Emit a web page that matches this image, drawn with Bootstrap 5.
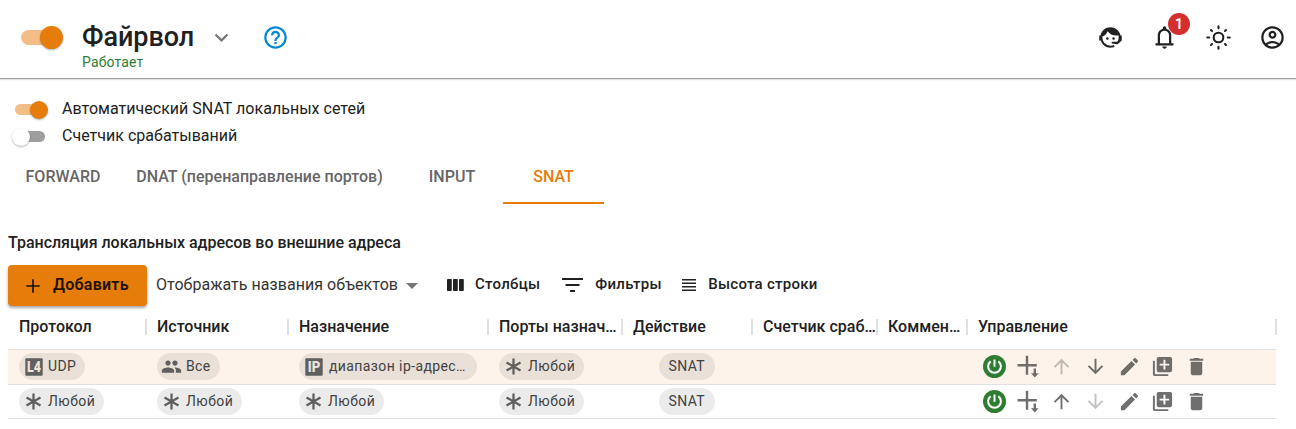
<!DOCTYPE html>
<html lang="ru">
<head>
<meta charset="utf-8">
<meta name="viewport" content="width=device-width, initial-scale=1">
<title>Файрвол</title>
<link href="https://cdn.jsdelivr.net/npm/bootstrap@5.3.0/dist/css/bootstrap.min.css" rel="stylesheet">
<style>
:root { --accent: #e67c0a; --ink: #212121; --mute: #666; --line: #e0e0e0; }
html, body { height: 100%; overflow: hidden; }
body { font-family: Roboto, "Noto Sans", sans-serif; color: var(--ink); font-size: 16px; line-height: 1.5; background: #fff; }
svg { display: block; flex: none; fill: currentColor; }
.topbar { height: 79px; border-bottom: 1px solid #a3a3a3; box-shadow: 0 1px 1px rgba(0,0,0,.12); padding: 0 10px 0 21px; }
.title-block { margin: 21px 0 0 23px; width: 112px; }
.top-icon { margin-top: 24px; }
.toggle { position: relative; display: block; width: 30px; height: 11px; border-radius: 6px; background: #9e9e9e; flex: none; }
.toggle::after { content: ""; position: absolute; left: -3px; top: -3px; width: 18px; height: 18px; border-radius: 50%; background: #fff; box-shadow: 0 1px 2px rgba(0,0,0,.3); }
.toggle.on { background: #f3be85; }
.toggle.on::after { left: 15px; background: var(--accent); }
.toggle.big { width: 38px; height: 15px; border-radius: 8px; margin-top: 30px; }
.toggle.big::after { left: 19px; top: -4px; width: 23px; height: 23px; }
.page-name { font-size: 27px; font-weight: 490; line-height: 32px; letter-spacing: -.05px; }
.state { font-size: 14px; line-height: 18px; color: #2e7d32; letter-spacing: .15px; }
.count { position: absolute; left: 17px; top: -11px; width: 22px; height: 22px; border-radius: 50%; background: #d32f2f; color: #fff; font-size: 14px; font-weight: 600; line-height: 22px; text-align: center; }
.opt { height: 27px; padding-left: 15px; letter-spacing: .02px; }
.opt .toggle { margin-top: 1px; }
.opt .cap { margin-left: 17px; }
.sections { height: 55px; color: var(--mute); font-weight: 490; letter-spacing: .02px; }
.sections a { color: inherit; text-decoration: none; line-height: 55px; height: 55px; text-align: center; white-space: nowrap; }
.sections a.current { color: var(--accent); border-bottom: 2px solid var(--accent); }
.subject { font-weight: 490; font-size: 16px; line-height: 24px; padding-left: 8px; margin-top: 27px; letter-spacing: -.02px; }
.tools { height: 41px; margin-top: 10px; padding-left: 8px; font-weight: 500; font-size: 15px; letter-spacing: .27px; }
.tools > span { position: relative; top: -1px; }
.add { width: 139px; height: 41px; border-radius: 4px; background: var(--accent); color: #1d1206; font-size: 16px; padding: 0 0 0 15px; letter-spacing: .25px; box-shadow: 0 2px 3px rgba(0,0,0,.35); }
.add span { margin: -2px 0 0 10px; font-weight: 600; }
.pick { font-weight: 400; font-size: 16px; letter-spacing: .04px; color: #333; margin-left: 9px; }
.rules { table-layout: fixed; width: 1268px; margin: 0 0 0 8px; border-collapse: separate; border-spacing: 0; }
.rules th { position: relative; height: 44px; padding: 0 0 2px 11px; font-weight: 480; font-size: 16px; border-bottom: 1px solid var(--line); letter-spacing: 0; }
.rules th > div, .chip span { overflow: hidden; white-space: nowrap; text-overflow: ellipsis; }
.rules th::after { content: ""; position: absolute; right: -1px; top: 13px; width: 2px; height: 16px; background: var(--line); }
.rules td { height: 35px; padding: 3px 0 0 11px; border-bottom: 1px solid var(--line); vertical-align: top; }
.rules tr.picked td { background: #fdf3ea; }
.rules tr:last-child td { height: 34px; }
.chip { height: 27px; width: max-content; border-radius: 14px; background: rgba(0,0,0,.08); padding: 0 9px 0 6px; font-size: 14px; font-weight: 370; letter-spacing: .4px; color: #424242; line-height: 27px; }
.chip svg { color: #5f5f5f; margin-right: 6px; }
.chip .people { margin: 0 4px 0 -2px; }
.chip .boxed { margin-right: 5px; }
.chip.plain { margin-left: 26px; padding-left: 9.5px; padding-right: 9.5px; }
.chip.wide { width: 178px; }
.glyph-box { font: 900 14.5px/17px Roboto, sans-serif; letter-spacing: 0; fill: #ebe3dc; }
.acts { color: #6f6c69; gap: 10.7px; padding: 2px 0 0 5px; }
tr:last-child .acts { color: #6f6f6f; }
.acts .off { opacity: .42; }
</style>
</head>
<body>
<svg width="0" height="0" class="position-absolute">
  <symbol id="star" viewBox="0 0 18 18"><path d="M9 .5v17M1.6 4.7l14.8 8.6M1.6 13.3l14.8-8.6" fill="none" stroke="currentColor" stroke-width="2.4"/></symbol>
  <symbol id="people" viewBox="0 0 24 24"><path d="M16 11c1.66 0 2.99-1.34 2.99-3S17.66 5 16 5s-3 1.34-3 3 1.34 3 3 3zm-8 0c1.66 0 2.99-1.34 2.99-3S9.66 5 8 5 5 6.34 5 8s1.34 3 3 3zm0 2c-2.33 0-7 1.17-7 3.5V19h14v-2.5c0-2.33-4.67-3.5-7-3.5zm8 0c-.29 0-.62.02-.97.05 1.16.84 1.97 1.97 1.97 3.45V19h6v-2.5c0-2.33-4.67-3.5-7-3.5z"/></symbol>
  <symbol id="power" viewBox="0 0 23 23"><circle cx="11.5" cy="11.5" r="11.5" fill="#2e7d32"/><path d="M11.5 4.4v7.4M7.6 6.4a6.4 6.4 0 1 0 7.8 0" fill="none" stroke="#fff" stroke-width="2"/></symbol>
  <symbol id="insert" viewBox="0 0 23 23"><path d="M10 .8v19M.6 10.3h19.2" fill="none" stroke="currentColor" stroke-width="2.4"/><path d="M16.6 13.5H19v4.8h2.6l-3.8 4.200-3.800-4.200h2.600z"/></symbol>
  <symbol id="up" viewBox="0 0 24 24"><path d="m4 12 1.41 1.41L11 7.83V20h2V7.83l5.58 5.59L20 12l-8-8-8 8z"/></symbol>
  <symbol id="down" viewBox="0 0 24 24"><path d="m20 12-1.41-1.41L13 16.17V4h-2v12.17l-5.58-5.59L4 12l8 8 8-8z"/></symbol>
  <symbol id="edit" viewBox="0 0 24 24"><path d="M3 17.25V21h3.75L17.81 9.94l-3.75-3.75L3 17.25zM20.71 7.04c.39-.39.39-1.02 0-1.41l-2.34-2.34a.9959.9959 0 0 0-1.41 0l-1.83 1.83 3.75 3.75 1.83-1.83z"/></symbol>
  <symbol id="copy" viewBox="0 0 24 24"><path d="M4 6H2v14c0 1.1.9 2 2 2h14v-2H4V6zm16-4H8c-1.1 0-2 .9-2 2v12c0 1.1.9 2 2 2h12c1.1 0 2-.9 2-2V4c0-1.1-.9-2-2-2zm-1 9h-4v4h-2v-4H9V9h4V5h2v4h4v2z"/></symbol>
  <symbol id="trash" viewBox="0 0 24 24"><path d="M6 19c0 1.1.9 2 2 2h8c1.1 0 2-.9 2-2V7H6v12zM19 4h-3.5l-1-1h-5l-1 1H5v2h14V4z"/></symbol>
</svg>

<header class="topbar d-flex">
  <span class="toggle big on"></span>
  <hgroup class="title-block mb-0">
    <div class="page-name">Файрвол</div>
    <div class="state">Работает</div>
  </hgroup>
  <svg class="top-icon" width="27" height="27" viewBox="0 0 24 24" style="margin-left:14px" color="#757575"><path d="M7.41 8.59 12 13.17l4.59-4.58L18 10l-6 6-6-6 1.41-1.41z"/></svg>
  <svg class="top-icon" width="27" height="27" viewBox="0 0 24 24" style="margin-left:27px" color="#0288d1"><path d="M11 18h2v-2h-2v2zm1-16C6.48 2 2 6.48 2 12s4.48 10 10 10 10-4.48 10-10S17.52 2 12 2zm0 18c-4.41 0-8-3.59-8-8s3.59-8 8-8 8 3.59 8 8-3.59 8-8 8zm0-14c-2.21 0-4 1.79-4 4h2c0-1.1.9-2 2-2s2 .9 2 2c0 2-3 1.75-3 5h2c0-2.25 3-2.5 3-5 0-2.21-1.79-4-4-4z"/></svg>
  <div class="top-icon d-flex ms-auto" style="gap:27px">
    <svg width="27" height="27" viewBox="0 0 24 24"><path d="M18.72 14.76C19.07 13.91 19.26 13 19.26 12C19.26 11.28 19.15 10.59 18.96 9.95C18.31 10.1 17.63 10.18 16.92 10.18C13.86 10.18 11.15 8.67 9.5 6.34C8.61 8.5 6.91 10.26 4.77 11.22C4.73 11.47 4.73 11.74 4.73 12A7.27 7.27 0 0 0 12 19.27C13.05 19.27 14.06 19.04 14.97 18.63C15.54 19.72 15.8 20.26 15.78 20.26C14.14 20.81 12.87 21.08 12 21.08C9.58 21.08 7.27 20.13 5.57 18.42C4.53 17.38 3.76 16.11 3.33 14.73H2V10.18H3.09C3.93 6.04 7.6 2.92 12 2.92C14.4 2.92 16.71 3.87 18.42 5.58C19.69 6.84 20.54 8.45 20.89 10.18H22V14.73H21.94L18.38 18L13.08 17.4V15.73H17.91L18.72 14.76M9.27 11.77C9.9 11.77 10.4 12.28 10.4 12.91S9.9 14.04 9.27 14.04 8.13 13.54 8.13 12.91 8.64 11.77 9.27 11.77M14.72 11.77C15.35 11.77 15.85 12.28 15.85 12.91S15.35 14.04 14.72 14.04 13.58 13.54 13.58 12.91A1.14 1.14 0 0 1 14.72 11.77Z"/></svg>
    <div class="position-relative" style="height:27px">
      <svg width="27" height="27" viewBox="0 0 24 24"><path d="M4 19v-2h2v-7q0-2.075 1.25-3.688T10.5 4.2v-.7q0-.625.438-1.063T12 2t1.063.438T13.5 3.5v.7q2 .5 3.25 2.113T18 10v7h2v2Zm8 3q-.825 0-1.413-.588T10 20h4q0 .825-.588 1.413T12 22Zm-4-5h8v-7q0-1.65-1.175-2.825T12 6 9.175 7.175 8 10Z"/></svg>
      <span class="count">1</span>
    </div>
    <svg width="27" height="27" viewBox="-13.5 -13.5 27 27" stroke="currentColor" stroke-width="2.1" style="fill:none"><circle r="4.8"/><path stroke-linecap="round" d="M0-9.3v-1.9M0 9.3v1.9M-9.3 0h-1.9M9.3 0h1.9M6.5 6.5l1 1M-6.5-6.5l-1-1M6.5-6.5l1-1M-6.5 6.5l-1 1"/></svg>
    <svg width="27" height="27" viewBox="0 0 24 24"><path d="M12 2C6.48 2 2 6.48 2 12s4.48 10 10 10 10-4.48 10-10S17.52 2 12 2zM7.35 18.5C8.66 17.56 10.26 17 12 17s3.34.56 4.65 1.5C15.34 19.44 13.74 20 12 20s-3.34-.56-4.65-1.5zm10.79-1.38C16.45 15.8 14.32 15 12 15s-4.45.8-6.14 2.12C4.7 15.73 4 13.95 4 12c0-4.42 3.58-8 8-8s8 3.58 8 8c0 1.95-.7 3.73-1.86 5.12zM12 6c-1.93 0-3.5 1.57-3.5 3.5S10.07 13 12 13s3.5-1.57 3.5-3.5S13.93 6 12 6zm0 5c-.83 0-1.5-.67-1.5-1.5S11.17 8 12 8s1.5.67 1.5 1.5S12.83 11 12 11z"/></svg>
  </div>
</header>

<main>
  <div class="pt-3">
    <div class="opt d-flex align-items-center"><span class="toggle on"></span><span class="cap">Автоматический SNAT локальных сетей</span></div>
    <div class="opt d-flex align-items-center"><span class="toggle"></span><span class="cap">Счетчик срабатываний</span></div>
  </div>
  <nav class="sections d-flex">
    <a href="#" style="width:126px">FORWARD</a>
    <a href="#" style="width:267px">DNAT (перенаправление портов)</a>
    <a href="#" style="width:110px;padding-left:8px">INPUT</a>
    <a href="#" class="current" style="width:101px">SNAT</a>
  </nav>
  <h2 class="subject mb-0">Трансляция локальных адресов во внешние адреса</h2>
  <div class="tools d-flex align-items-center">
    <button class="add btn border-0 d-flex align-items-center"><svg width="20" height="20" viewBox="0 0 24 24"><path d="M20 13h-7v7h-2v-7H4v-2h7V4h2v7h7z"/></svg><span>Добавить</span></button>
    <span class="pick">Отображать названия объектов</span>
    <svg width="12" height="6" viewBox="0 0 12 6" color="#757575" style="margin:1px 0 0 8px"><path d="M0 0h12L6 6z"/></svg>
    <svg width="17" height="12" viewBox="0 0 17 12" style="margin:-1px 0 0 29px"><rect width="4.8" height="12" rx=".8"/><rect x="6" width="4.8" height="12" rx=".8"/><rect x="12" width="4.8" height="12" rx=".8"/></svg>
    <span style="margin-left:11px">Столбцы</span>
    <svg width="21" height="14" viewBox="0 0 21 14" style="margin:-1px 0 0 22px"><path d="M0 0h21v2H0zM3.5 6h14v2h-14zM8 12h5v2H8z"/></svg>
    <span style="margin-left:12px">Фильтры</span>
    <svg width="14" height="12" viewBox="0 0 14 12" style="margin:-1px 0 0 20px"><path d="M0 0h14v1.5H0zM0 3.5h14V5H0zM0 7h14v1.5H0zM0 10.5h14V12H0z"/></svg>
    <span style="margin-left:12.5px">Высота строки</span>
  </div>
  <table class="rules">
    <colgroup><col style="width:138px"><col style="width:142px"><col style="width:200px"><col style="width:134px"><col style="width:130px"><col style="width:125px"><col style="width:90px"><col style="width:309px"></colgroup>
    <thead><tr>
      <th><div>Протокол</div></th><th><div>Источник</div></th><th><div>Назначение</div></th><th><div>Порты назнач…</div></th><th><div>Действие</div></th><th><div>Счетчик сраб…</div></th><th><div>Коммен…</div></th><th><div>Управление</div></th>
    </tr></thead>
    <tbody>
    <tr class="picked">
      <td><div class="chip d-flex align-items-center"><svg class="boxed" width="18" height="18" viewBox="0 0 18 18"><rect x=".3" y=".3" width="17.4" height="17.4" rx="1"/><text x="2" y="14" textLength="14" lengthAdjust="spacingAndGlyphs" class="glyph-box">L4</text></svg><span>UDP</span></div></td>
      <td><div class="chip d-flex align-items-center"><svg class="people" width="21" height="21"><use href="#people"/></svg><span>Все</span></div></td>
      <td><div class="chip wide d-flex align-items-center"><svg width="18" height="18" viewBox="0 0 18 18"><rect x=".3" y=".3" width="17.4" height="17.4" rx="1"/><text x="2.8" y="14" textLength="12.5" lengthAdjust="spacingAndGlyphs" class="glyph-box">IP</text></svg><span>диапазон ip-адрес…</span></div></td>
      <td><div class="chip d-flex align-items-center"><svg width="17" height="17"><use href="#star"/></svg><span>Любой</span></div></td>
      <td><div class="chip plain">SNAT</div></td>
      <td></td><td></td>
      <td><div class="acts d-flex"><svg width="23" height="23"><use href="#power"/></svg><svg width="23" height="23"><use href="#insert"/></svg><svg width="23" height="23" class="off"><use href="#up"/></svg><svg width="23" height="23"><use href="#down"/></svg><svg width="23" height="23"><use href="#edit"/></svg><svg width="23" height="23"><use href="#copy"/></svg><svg width="23" height="23"><use href="#trash"/></svg></div></td>
    </tr>
    <tr>
      <td><div class="chip d-flex align-items-center"><svg width="17" height="17"><use href="#star"/></svg><span>Любой</span></div></td>
      <td><div class="chip d-flex align-items-center"><svg width="17" height="17"><use href="#star"/></svg><span>Любой</span></div></td>
      <td><div class="chip d-flex align-items-center"><svg width="17" height="17"><use href="#star"/></svg><span>Любой</span></div></td>
      <td><div class="chip d-flex align-items-center"><svg width="17" height="17"><use href="#star"/></svg><span>Любой</span></div></td>
      <td><div class="chip plain">SNAT</div></td>
      <td></td><td></td>
      <td><div class="acts d-flex"><svg width="23" height="23"><use href="#power"/></svg><svg width="23" height="23"><use href="#insert"/></svg><svg width="23" height="23"><use href="#up"/></svg><svg width="23" height="23" class="off"><use href="#down"/></svg><svg width="23" height="23"><use href="#edit"/></svg><svg width="23" height="23"><use href="#copy"/></svg><svg width="23" height="23"><use href="#trash"/></svg></div></td>
    </tr>
    </tbody>
  </table>
</main>
<script src="https://cdn.jsdelivr.net/npm/bootstrap@5.3.0/dist/js/bootstrap.bundle.min.js"></script>
</body>
</html>
